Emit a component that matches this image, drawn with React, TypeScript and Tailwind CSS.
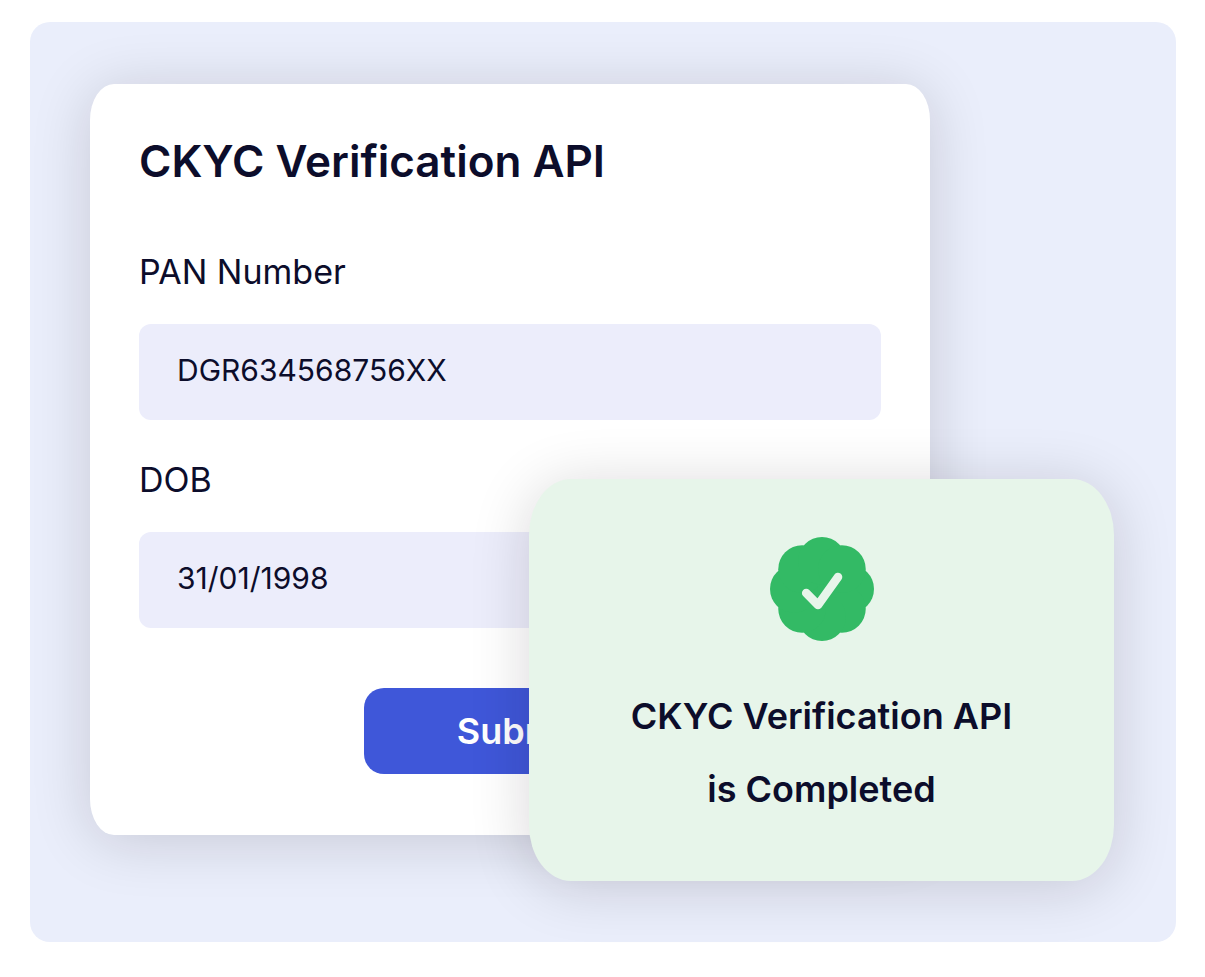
import { useState } from "react";

const LOBES = [0, 45, 90, 135, 180, 225, 270, 315];

function VerifiedBadge() {
  return (
    <svg
      className="size-26 shrink-0"
      viewBox="-52 -52 104 104"
      role="img"
      aria-label="Verified"
    >
      <g fill="#33ba65">
        <circle r="34" />
        {LOBES.map((angle) => (
          <circle key={angle} cx="28.1" r="23.9" transform={`rotate(${angle})`} />
        ))}
      </g>
      <path
        d="M-15.8 4 L-4 16 L16 -12"
        fill="none"
        stroke="#e7f5ea"
        strokeWidth="8.6"
        strokeLinecap="round"
        strokeLinejoin="round"
      />
    </svg>
  );
}

type FieldProps = {
  id: string;
  label: string;
  value: string;
  onChange: (value: string) => void;
};

function Field({ id, label, value, onChange }: FieldProps) {
  return (
    <div className="flex flex-col gap-8">
      <label htmlFor={id} className="text-[34px] leading-10">
        {label}
      </label>
      <input
        id={id}
        type="text"
        value={value}
        onChange={(e) => onChange(e.target.value)}
        className="h-24 w-full rounded-xl bg-[#ecedfb] px-[38px] pb-1 text-[30px] outline-none"
      />
    </div>
  );
}

export default function App() {
  const [pan, setPan] = useState("DGR634568756XX");
  const [dob, setDob] = useState("31/01/1998");

  return (
    <main className="bg-white pt-[22px] pr-[29px] pb-[35px] pl-[30px] font-['Inter',sans-serif] text-[#0c0d2b]">
      <section className="relative rounded-[20px] bg-[#eaeefb] px-[60px] pt-[62px] pb-[107px]">
        <form
          onSubmit={(e) => e.preventDefault()}
          className="flex w-full max-w-[840px] flex-col rounded-[24px/36px] bg-white px-[49px] pt-[50px] pb-[61px] shadow-[0_6px_60px_rgba(20,0,20,0.16)]"
        >
          <h1 className="text-[44px] leading-[54px] font-semibold">CKYC Verification API</h1>
          <div className="mt-16 flex flex-col gap-10">
            <Field id="pan" label="PAN Number" value={pan} onChange={setPan} />
            <Field id="dob" label="DOB" value={dob} onChange={setDob} />
          </div>
          <button
            type="submit"
            className="mt-[60px] ml-[225px] h-[86px] w-[308px] rounded-[20px] bg-[#3f57d9] text-4xl font-semibold text-white"
          >
            Submit
          </button>
        </form>

        <div
          role="status"
          className="absolute right-[62px] bottom-[61px] flex w-[585px] flex-col items-center gap-[39px] rounded-[42px/56px] bg-[#e7f5ea] px-10 pt-[58px] pb-[55px] shadow-[0_6px_60px_rgba(20,0,20,0.16)]"
        >
          <VerifiedBadge />
          <p className="text-center text-4xl leading-[73px] font-semibold">
            CKYC Verification API
            <br />
            is Completed
          </p>
        </div>
      </section>
    </main>
  );
}
